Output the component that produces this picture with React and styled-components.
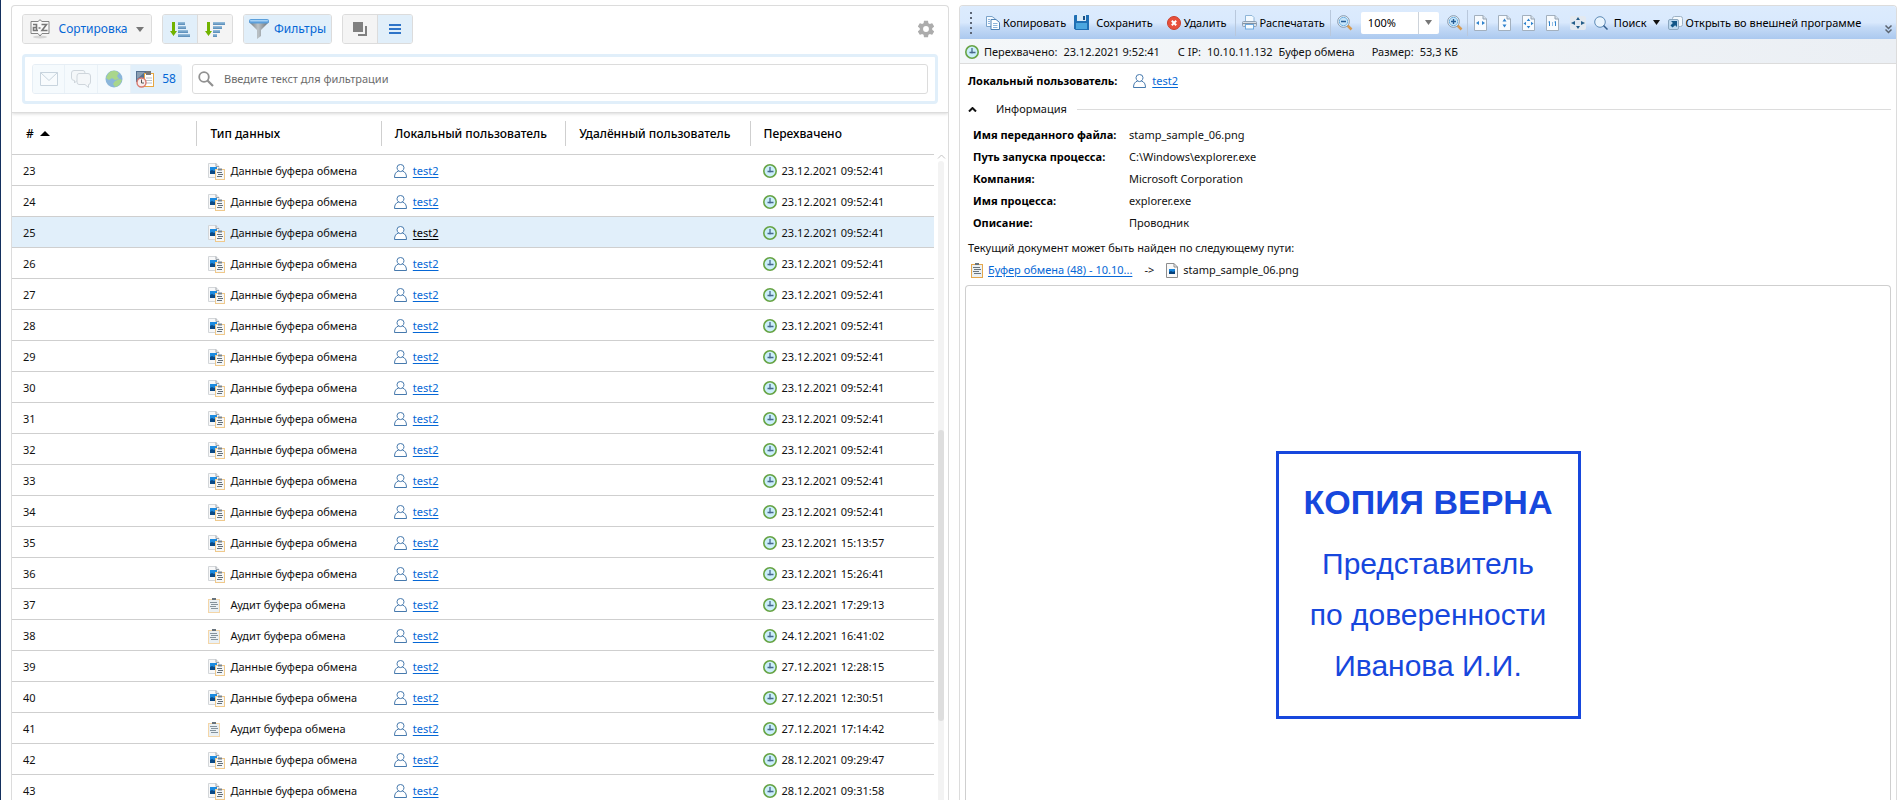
import React from "react";
import styled, { createGlobalStyle } from "styled-components";

const GlobalStyle = createGlobalStyle`
  * { box-sizing: border-box; }
  body {
    margin: 0;
    background: #fff;
    color: #111;
    font-family: "Noto Sans", "Open Sans", sans-serif;
    font-size: 11px;
    line-height: 16px;
    overflow: hidden;
  }
  button, input, select { font: inherit; color: inherit; }
  svg { display: block; flex: none; }
`;

const line = "#cfcfcf";
const frame = "#dcdcdc";
const pale = "#e1effa";
const blue = "#0567d6";

const Page = styled.main`
  display: grid;
  grid-template-columns: minmax(0, 1fr) minmax(0, 1fr);
  gap: 10px;
  height: 100vh;
  padding: 5px 1px 0 10px;
  border-left: 1px solid #14305f;
`;

const Panel = styled.section`
  display: flex;
  flex-direction: column;
  min-height: 0;
  overflow: hidden;
  border: 1px solid ${frame};
  border-bottom: 0;
  border-radius: 4px 4px 0 0;
`;

/* ---------- left panel: tools ---------- */

const Tools = styled.div`
  position: relative;
  padding: 8px 10px;
  border-bottom: 1px solid ${frame};
  box-shadow: 0 1px 3px rgba(0, 0, 0, 0.15);
`;

const ToolRow = styled.div`
  display: flex;
  align-items: center;
  gap: 10px;
  margin-bottom: 10px;
`;

const ButtonGroup = styled.div`
  display: flex;
  height: 30px;
  overflow: hidden;
  border: 1px solid ${frame};
  border-radius: 3px;
`;

const ToolButton = styled.button`
  display: flex;
  align-items: center;
  justify-content: center;
  gap: ${(p) => p.$gap || 5}px;
  width: ${(p) => p.$width}px;
  padding: 0;
  border: 0;
  background: ${(p) => (p.$active ? pale : "#f4f4f4")};
  color: ${blue};
  font-size: 12px;
  & + & { border-left: 1px solid ${frame}; }
`;

const GearButton = styled.button`
  margin-left: auto;
  padding: 0 2px;
  border: 0;
  background: none;
`;

const FilterBox = styled.div`
  display: flex;
  gap: 10px;
  padding: 7px;
  border: 3px solid ${pale};
  border-radius: 4px;
`;

const SourceGroup = styled(ButtonGroup)`
  border-color: #e6eef5;
`;

const SourceButton = styled(ToolButton)`
  background: ${(p) => (p.$active ? pale : "#f5fafd")};
  & + & { border-left-color: #e9f1f7; }
`;

const SearchField = styled.label`
  display: flex;
  flex: 1;
  align-items: center;
  gap: 10px;
  height: 30px;
  padding: 0 5px;
  border: 1px solid ${frame};
  border-radius: 3px;
`;

const SearchInput = styled.input`
  flex: 1;
  min-width: 0;
  padding: 0;
  border: 0;
  outline: 0;
  background: none;
  &::placeholder { color: #6c6c6c; opacity: 1; }
`;

/* ---------- left panel: table ---------- */

const ListArea = styled.div`
  display: flex;
  flex: 1;
  min-height: 0;
`;

const TableWrap = styled.div`
  flex: 1;
  min-width: 0;
  overflow: hidden;
`;

const Table = styled.table`
  width: 100%;
  table-layout: fixed;
  border-spacing: 0;
`;

const HeadCell = styled.th`
  height: 42px;
  padding: 0;
  border-bottom: 1px solid ${line};
  color: #000;
  font-size: 12px;
  font-weight: 500;
  text-align: left;
  white-space: nowrap;
`;

const HeadLabel = styled.span`
  display: flex;
  align-items: center;
  gap: 6px;
  height: 25px;
  padding-left: 13px;
  border-left: 1px solid ${(p) => (p.$first ? "transparent" : line)};
`;

const Row = styled.tr`
  background: ${(p) => (p.$selected ? pale : "#fff")};
`;

const Cell = styled.td`
  height: 31px;
  padding: 2px 0 0 ${(p) => p.$inset}px;
  border-bottom: 1px solid ${line};
  white-space: nowrap;
`;

const CellContent = styled.span`
  display: flex;
  align-items: center;
  gap: ${(p) => p.$gap}px;
`;

const IconSlot = styled.span`
  width: 18px;
`;

const Link = styled.a`
  color: ${(p) => (p.$dark ? "#000" : blue)};
  text-decoration: underline;
  text-underline-offset: 2px;
`;

const ScrollColumn = styled.div`
  display: flex;
  flex-direction: column;
  align-items: center;
  gap: 2px;
  width: 14px;
  padding-top: 41px;
`;

const Track = styled.div`
  flex: 1;
  width: 6px;
  border-radius: 3px 3px 0 0;
  background: #f3f3f3;
`;

const Thumb = styled.div`
  height: 291px;
  margin-top: 269px;
  border-radius: 3px;
  background: #dedede;
`;

/* ---------- right panel ---------- */

const Ribbon = styled.div`
  display: flex;
  align-items: center;
  height: 33px;
  padding: 0 4px 0 10px;
  background: linear-gradient(#dcebfd 0%, #d9e9fd 50%, #c4daf6 65%, #abc9ef 100%);
  color: #000;
`;

const Grip = styled.span`
  width: 2px;
  height: 22px;
  margin-right: 14px;
  background: repeating-linear-gradient(#5c6676 0 2px, transparent 2px 5px);
`;

const RibbonButton = styled.button`
  display: flex;
  align-items: center;
  gap: ${(p) => p.$gap || 3}px;
  margin-right: ${(p) => p.$after || 0}px;
  padding: 0;
  border: 0;
  background: none;
  white-space: nowrap;
`;

const Divider = styled.span`
  width: 1px;
  height: 26px;
  margin-right: 6px;
  background: #b9c8dc;
`;

const ZoomBox = styled.span`
  position: relative;
  display: flex;
  width: 78px;
  height: 22px;
  margin-right: 8px;
  background: #fff;
  border-radius: 2px;
`;

const ZoomSelect = styled.select`
  width: 100%;
  padding: 0 0 0 7px;
  border: 0;
  outline: 0;
  appearance: none;
  background: none;
`;

const ZoomArrow = styled.span`
  position: absolute;
  inset: 0 0 0 auto;
  display: grid;
  place-items: center;
  width: 21px;
  border-left: 1px solid #cdd3da;
  pointer-events: none;
`;

const MoreButton = styled.button`
  align-self: flex-end;
  margin-left: auto;
  padding: 0 0 5px;
  border: 0;
  background: none;
`;

const MetaBar = styled.div`
  display: flex;
  align-items: center;
  height: 25px;
  padding: 1px 0 0 5px;
  border-bottom: 1px solid ${frame};
  background: linear-gradient(90deg, #f4f7f9, #ebeff4);
`;

const Meta = styled.span`
  display: flex;
  gap: 6px;
  margin-right: ${(p) => p.$after || 0}px;
  padding-left: ${(p) => p.$before || 0}px;
`;

const UserLine = styled.div`
  display: flex;
  align-items: center;
  gap: 6px;
  height: 34px;
  padding-left: 8px;
  strong { margin-right: 10px; color: #000; }
`;

const InfoToggle = styled.button`
  display: flex;
  align-items: center;
  gap: 19px;
  width: 100%;
  height: 22px;
  padding: 0 5px 0 8px;
  border: 0;
  background: none;
  &::after {
    content: "";
    flex: 1;
    height: 1px;
    margin-left: -9px;
    background: ${frame};
  }
`;

const Details = styled.dl`
  display: grid;
  grid-template-columns: 156px 1fr;
  grid-auto-rows: 22px;
  align-items: center;
  margin: 4px 0 0;
  padding-left: 13px;
`;

const Term = styled.dt`
  color: #000;
  font-weight: 700;
  white-space: nowrap;
`;

const Value = styled.dd`
  margin: 0;
`;

const PathNote = styled.p`
  margin: 6px 0 5px;
  padding-left: 8px;
`;

const PathLine = styled.div`
  display: flex;
  align-items: center;
  gap: 5px;
  height: 18px;
  padding-left: 11px;
`;

const Arrow = styled.span`
  margin: 0 7px;
`;

const Preview = styled.div`
  flex: 1;
  margin: 6px 5px 0;
  padding-top: 165px;
  border: 1px solid ${line};
  border-bottom: 0;
  border-radius: 4px 4px 0 0;
`;

const Stamp = styled.figure`
  display: flex;
  flex-direction: column;
  align-items: center;
  width: 305px;
  height: 268px;
  margin: 0 auto;
  padding-top: 20px;
  border: 3px solid #1747dd;
  color: #1747dd;
  font-family: "Liberation Sans", sans-serif;
  font-size: 30px;
  line-height: 51px;
  white-space: nowrap;
  strong { font-size: 34px; line-height: 56px; margin-bottom: 8px; }
`;

/* ---------- icons ---------- */

const Caret = ({ color = "#777", w = 8, up }) => (
  <svg width={w} height="5" viewBox="0 0 8 5" preserveAspectRatio="none" aria-hidden="true">
    <path d={up ? "M0 5L4 0L8 5Z" : "M0 0H8L4 5Z"} fill={color} />
  </svg>
);

const SortIcon = () => (
  <svg width="20" height="20" viewBox="0 0 20 20" aria-hidden="true">
    <ellipse cx="10" cy="18" rx="7" ry="1.5" fill="#d5d5d5" />
    <path d="M1 2.5H8L10 .7L12 2.5H19V14.5H12L10 17L8 14.5H1Z" fill="#fafafa" stroke="#858585" />
    <path d="M3 5.500H6.500V12M6.500 8.500H3.500V11.500H8M8.500 9H10.500M11.500 5.500H16.500L12 11.500H17.500" fill="none" stroke="#777" strokeWidth="1.600" />
  </svg>
);

const barWidths = { up: [7, 8, 10, 12], down: [12, 9, 7, 4] };

const BarsIcon = ({ kind }) => (
  <svg width="20" height="15" viewBox="0 0 20 15" aria-hidden="true">
    <defs>
      <linearGradient id={`bars-${kind}`} x2="0" y2="1">
        <stop stopColor="#9cc2de" />
        <stop offset="1" stopColor="#5489b7" />
      </linearGradient>
    </defs>
    <path d="M2 0H5V9H7L3.500 14L0 9H2Z" fill="#72b300" />
    {barWidths[kind].map((w, i) => (
      <rect key={w} x="8" y={i * 4} width={w} height="3" fill={`url(#bars-${kind})`} />
    ))}
  </svg>
);

const FunnelIcon = () => (
  <svg width="20" height="20" viewBox="0 0 20 20" aria-hidden="true">
    <defs>
      <linearGradient id="funnel">
        <stop stopColor="#6d7479" />
        <stop offset=".45" stopColor="#bcc3c7" />
        <stop offset="1" stopColor="#656c71" />
      </linearGradient>
    </defs>
    <path d="M0 3H20L12 11V17L8 20V11Z" fill="url(#funnel)" />
    <rect width="20" height="4.500" rx="2" fill="#5b9fdb" />
    <rect x="1" y="1" width="18" height="1.500" rx=".7" fill="#a7d2f5" />
  </svg>
);

const CardsIcon = () => (
  <svg width="15" height="14" viewBox="0 0 15 14" aria-hidden="true">
    <rect width="10" height="10" fill="#808080" />
    <path d="M13 4V13H5" fill="none" stroke="#808080" strokeWidth="2" />
  </svg>
);

const LinesIcon = () => (
  <svg width="12" height="10" viewBox="0 0 12 10" aria-hidden="true">
    <path d="M0 1H12M0 5H12M0 9H12" stroke="#2f74c8" strokeWidth="2" />
  </svg>
);

const GearIcon = () => (
  <svg width="20" height="20" viewBox="0 0 24 24" aria-hidden="true">
    <path fill="#acacac" d="M19.430 12.980c.04-.32.07-.64.07-.98s-.03-.66-.07-.98l2.110-1.650c.19-.15.24-.42.12-.64l-2-3.460c-.12-.22-.39-.3-.61-.22l-2.490 1c-.52-.4-1.080-.73-1.690-.98l-.38-2.650C14.460 2.180 14.250 2 14 2h-4c-.25 0-.46.18-.49.42l-.38 2.650c-.61.25-1.170.59-1.690.98l-2.490-1c-.23-.09-.49 0-.61.22l-2 3.460c-.13.22-.07.49.12.64l2.110 1.650c-.04.32-.07.65-.07.98s.03.66.07.98l-2.110 1.650c-.19.15-.24.42-.12.64l2 3.460c.12.22.39.3.61.22l2.490-1c.52.4 1.080.73 1.690.98l.38 2.650c.03.24.24.42.49.42h4c.25 0 .46-.18.49-.42l.38-2.650c.61-.25 1.170-.59 1.690-.98l2.490 1c.23.09.49 0 .61-.22l2-3.460c.12-.22.07-.49-.12-.64l-2.110-1.650zM12 15.500a3.500 3.500 0 1 1 0-7 3.500 3.500 0 0 1 0 7z" />
  </svg>
);

const MailIcon = () => (
  <svg width="18" height="14" viewBox="0 0 18 14" aria-hidden="true">
    <path d="M.5.5H17.500V13.500H.5ZM.5.5L9 8.500L17.500.5" fill="#f8fbfd" stroke="#c8d4de" />
  </svg>
);

const ChatIcon = () => (
  <svg width="20" height="18" viewBox="0 0 20 18" aria-hidden="true">
    <g fill="#f4f7f9" stroke="#cfd6dc">
      <path d="M3 .5H12Q14 .5 14 3V8Q14 10.500 12 10.500H6L3.500 13V10.500Q.5 10.500.5 8V3Q.5.5 3 .5Z" />
      <path d="M8 3.500H17Q19.500 3.500 19.500 6V12Q19.500 14.500 17.500 14.500V17.500L14 14.500H8Q6 14.500 6 12V6Q6 3.500 8 3.500Z" />
    </g>
  </svg>
);

const GlobeIcon = () => (
  <svg width="18" height="18" viewBox="0 0 18 18" aria-hidden="true">
    <circle cx="9" cy="9" r="8.500" fill="#8bb6da" />
    <path d="M3 4Q6 0 11 1L14 3L12 6L14 9L10 10L7 8L4 10L1 8ZM10 11L15 9L17 10Q15 16 10 17L8 14Z" fill="#a9d68b" />
  </svg>
);

const ClipTimeIcon = () => (
  <svg width="18" height="17" viewBox="0 0 18 17" aria-hidden="true">
    <rect width="14" height="11" fill="#54708f" />
    <path d="M1 1H9L1 8Z" fill="#8b9eb2" />
    <rect x="8.500" y="2.500" width="9" height="13" fill="#fff" stroke="#e8a640" />
    <rect x="10" y="0" width="5" height="4" fill="#777" />
    <path d="M10 7H16M10 9.500H16M10 12H16" stroke="#b9bfc5" />
    <circle cx="5.500" cy="11.500" r="4.500" fill="#f8eeee" stroke="#d9796e" strokeWidth="1.400" />
    <path d="M5.500 8.500V12H8" fill="none" stroke="#555" />
  </svg>
);

const MagnifierIcon = () => (
  <svg width="16" height="16" viewBox="0 0 16 16" aria-hidden="true">
    <circle cx="6" cy="6" r="4.800" fill="none" stroke="#919191" strokeWidth="1.800" />
    <path d="M9.500 9.500L15 15" stroke="#919191" strokeWidth="2.200" />
  </svg>
);

const UserIcon = () => (
  <svg width="13" height="14" viewBox="0 0 13 14" aria-hidden="true">
    <path d="M4.700 7Q3 5.600 3 3.700Q3 .5 6.500.5T10 3.700Q10 5.600 8.300 7Q12.500 8 12.500 13.500H.5Q.5 8 4.700 7ZM4.700 7Q6.500 8.200 8.300 7" fill="#fff" stroke="#4679ad" />
  </svg>
);

const ClockIcon = () => (
  <svg width="14" height="14" viewBox="0 0 14 14" aria-hidden="true">
    <circle cx="7" cy="7" r="6.200" fill="#cbeefb" stroke="#67a444" strokeWidth="1.600" />
    <path d="M7 3V8.500M4.500 7.500H10.500" fill="none" stroke="#47688a" strokeWidth="1.300" />
  </svg>
);

const DataIcon = () => (
  <svg width="18" height="17" viewBox="0 0 18 17" aria-hidden="true">
    <path d="M.5.5H8L11 3.500V14.500H.5Z" fill="#f7f8f9" stroke="#d3d6d9" />
    <path d="M8 .5V3.500H11" fill="none" stroke="#9ca2a8" />
    <rect x="2" y="4" width="7" height="7" fill="#1c8be0" />
    <path d="M2 11V8L4 7L6 8L9 7V11Z" fill="#0b4a86" />
    <rect x="7.500" y="6.500" width="9" height="10" fill="#f5f7f8" stroke="#efc98c" />
    <path d="M10 6.500H14" stroke="#7b858d" strokeWidth="2" />
    <path d="M9 9.500H14M10 11.500H15M9 13.500H14" stroke="#65717b" />
  </svg>
);

const AuditIcon = ({ strong }) => (
  <svg width="12" height="15" viewBox="0 0 12 15" aria-hidden="true">
    <rect x=".5" y="1.500" width="11" height="13" fill="#eaf0f4" stroke={strong ? "#e5a74c" : "#f4d6a8"} />
    <path d="M4 1H8" stroke="#68737c" strokeWidth="2" />
    <path d="M2 4.500H9M3 6.500H10M2 8.500H8M3 10.500H10" stroke={strong ? "#69747d" : "#84929c"} />
  </svg>
);

const PngIcon = () => (
  <svg width="12" height="15" viewBox="0 0 12 15" aria-hidden="true">
    <path d="M.5.5H8L11.500 4V14.500H.5Z" fill="#f9f9f9" stroke="#8d8d8d" />
    <path d="M8 .5V4H11.500" fill="none" stroke="#8d8d8d" />
    <rect x="3" y="6" width="6" height="5" fill="#1684da" />
    <path d="M3 11V9L5 8L7 9L9 8V11Z" fill="#063f78" />
  </svg>
);

const CopyIcon = () => (
  <svg width="14" height="14" viewBox="0 0 14 14" aria-hidden="true">
    <path d="M.5.500H6L9.500 3V10.500H.5Z" fill="#f5faff" stroke="#7ba3ca" />
    <path d="M5 3.500H10L13.500 6.500V13.500H5Z" fill="#fff" stroke="#4f81b4" />
    <path d="M2 3.500H4M2 5.500H4M2 7.500H4M7 7.500H11.500M7 9.500H11.500M7 11.500H11.500" stroke="#8fb5dc" />
  </svg>
);

const SaveIcon = () => (
  <svg width="15" height="15" viewBox="0 0 15 15" aria-hidden="true">
    <path d="M0 1Q0 0 1 0H15V15H1.500L0 13.500Z" fill="#1f6fb4" />
    <rect x="3" width="9" height="6" fill="#dcecf8" />
    <rect x="9" y="1" width="2" height="4" fill="#1b4f84" />
    <rect x="2" y="8" width="11" height="6" fill="#4ba6df" />
  </svg>
);

const DeleteIcon = () => (
  <svg width="14" height="14" viewBox="0 0 14 14" aria-hidden="true">
    <circle cx="7" cy="7" r="6.500" fill="#e8503b" stroke="#c9402e" />
    <path d="M4.800 4.800L9.200 9.200M9.200 4.800L4.800 9.200" stroke="#fff" strokeWidth="2" />
  </svg>
);

const PrintIcon = () => (
  <svg width="15" height="15" viewBox="0 0 15 15" aria-hidden="true">
    <path d="M3.500.5H10L12 2.500V7H3.500Z" fill="#f4faff" stroke="#8fb6d8" />
    <rect x=".5" y="6.500" width="14" height="5" rx="1" fill="#d9e1e9" stroke="#8fa1b4" />
    <rect x="3.500" y="9.500" width="8" height="4.500" fill="#f5fbff" stroke="#6fa9dd" />
    <path d="M1 8.500H14" stroke="#8292a3" />
  </svg>
);

const ZoomIcon = ({ plus }) => (
  <svg width="16" height="16" viewBox="0 0 16 16" aria-hidden="true">
    <path d="M10.500 10.500L14.500 14.500" stroke="#d99a4e" strokeWidth="2.500" />
    <circle cx="6.500" cy="6.500" r="5.800" fill="#f3f8fc" stroke="#8296aa" />
    <circle cx="6.500" cy="6.500" r="4.200" fill="#c6e5fa" stroke="#71b2e2" />
    <path d={plus ? "M4 6.500H9M6.500 4V9" : "M4 6.500H9"} stroke="#245c96" strokeWidth="1.400" />
  </svg>
);

const fitArrows = {
  width: "M5 6V10L2 8ZM8 6V10L11 8Z",
  height: "M4.500 6.500H8.500L6.500 3.500ZM4.500 9.500H8.500L6.500 12.500Z",
  page: "M4.700 6H8.300L6.500 3.500ZM4.700 11H8.300L6.500 13.500ZM4 6.700V10.300L1.500 8.500ZM9 6.700V10.300L11.500 8.500Z",
  actual: "M2 7L4 6V11H3V7.500ZM6 7.500H7V8.500H6ZM6 9.500H7V10.500H6ZM8 7L10 6V11H9V7.500Z",
};

const FitIcon = ({ kind }) => (
  <svg width="13" height="16" viewBox="0 0 13 16" aria-hidden="true">
    <path d="M.5.5H9L12.500 4V15.500H.5Z" fill="#f8fbfe" stroke="#a3b0be" />
    <path d="M9 .5V4H12.500" fill="#d8e1ea" stroke="#94a3b3" />
    <path d={fitArrows[kind]} fill="#2e82cd" />
  </svg>
);

const FullIcon = () => (
  <svg width="16" height="14" viewBox="0 0 16 14" aria-hidden="true">
    <rect width="16" height="14" rx="2" fill="#e3e9f0" />
    <path d="M6 4H10L8 1ZM6 10H10L8 13ZM5 5V9L1 7ZM11 5V9L15 7Z" fill="#235c88" />
  </svg>
);

const FindIcon = () => (
  <svg width="14" height="14" viewBox="0 0 14 14" aria-hidden="true">
    <circle cx="6" cy="6" r="5.300" fill="#e9f4fd" stroke="#5e8ab5" />
    <path d="M9.500 9.500L13.500 13.500" stroke="#315d8c" strokeWidth="1.500" />
  </svg>
);

const OpenIcon = () => (
  <svg width="15" height="14" viewBox="0 0 15 14" aria-hidden="true">
    <rect x="4.500" y=".5" width="10" height="10" rx="2" fill="#f3f8fc" stroke="#9eb2c5" />
    <rect x=".5" y="3.500" width="10" height="10" rx="1.500" fill="#bcd8ee" stroke="#8ba7bf" />
    <path d="M3 5H9V11L7.200 9.200L4.500 11.500L2.500 9.500L4.900 7Z" fill="#135787" />
  </svg>
);

const Chevrons = () => (
  <svg width="7" height="9" viewBox="0 0 7 9" aria-hidden="true">
    <path d="M.5.500L3.500 3.500L6.500.5M.5 4.500L3.500 7.500L6.500 4.500" fill="none" stroke="#5b6470" strokeWidth="1.500" />
  </svg>
);

const ChevronUp = ({ color, width }) => (
  <svg width="9" height="5" viewBox="0 0 9 5" aria-hidden="true">
    <path d="M1 4.500L4.500 1L8 4.500" fill="none" stroke={color} strokeWidth={width} />
  </svg>
);

/* ---------- data ---------- */

const laterTimes = [
  "23.12.2021 15:13:57", "23.12.2021 15:26:41", "23.12.2021 17:29:13",
  "24.12.2021 16:41:02", "27.12.2021 12:28:15", "27.12.2021 12:30:51",
  "27.12.2021 17:14:42", "28.12.2021 09:29:47", "28.12.2021 09:31:58",
];
const auditRows = [37, 38, 41];
const rows = Array.from({ length: 21 }, (_, i) => ({
  id: 23 + i,
  audit: auditRows.includes(23 + i),
  time: i < 12 ? "23.12.2021 09:52:41" : laterTimes[i - 12],
}));

const columns = ["Тип данных", "Локальный пользователь", "Удалённый пользователь", "Перехвачено"];

const details = [
  ["Имя переданного файла:", "stamp_sample_06.png"],
  ["Путь запуска процесса:", "C:\\Windows\\explorer.exe"],
  ["Компания:", "Microsoft Corporation"],
  ["Имя процесса:", "explorer.exe"],
  ["Описание:", "Проводник"],
];

const fits = [
  ["width", "По ширине"],
  ["height", "По высоте"],
  ["page", "Страница целиком"],
  ["actual", "Исходный размер"],
];

/* ---------- page ---------- */

function ListPanel() {
  return (
    <Panel>
      <Tools>
        <ToolRow>
          <ButtonGroup>
            <ToolButton $width={128} $gap={8}>
              <SortIcon />Сортировка<Caret />
            </ToolButton>
          </ButtonGroup>
          <ButtonGroup>
            <ToolButton $width={34} $active aria-label="По возрастанию"><BarsIcon kind="up" /></ToolButton>
            <ToolButton $width={35} aria-label="По убыванию"><BarsIcon kind="down" /></ToolButton>
          </ButtonGroup>
          <ButtonGroup>
            <ToolButton $width={87} $active><FunnelIcon />Фильтры</ToolButton>
          </ButtonGroup>
          <ButtonGroup>
            <ToolButton $width={34} aria-label="Карточки"><CardsIcon /></ToolButton>
            <ToolButton $width={35} $active aria-label="Список"><LinesIcon /></ToolButton>
          </ButtonGroup>
          <GearButton aria-label="Настройки"><GearIcon /></GearButton>
        </ToolRow>
        <FilterBox>
          <SourceGroup>
            <SourceButton $width={31} aria-label="Почта"><MailIcon /></SourceButton>
            <SourceButton $width={33} aria-label="Чаты"><ChatIcon /></SourceButton>
            <SourceButton $width={33} aria-label="Веб"><GlobeIcon /></SourceButton>
            <SourceButton $width={51} $active $gap={8}><ClipTimeIcon />58</SourceButton>
          </SourceGroup>
          <SearchField>
            <MagnifierIcon />
            <SearchInput type="text" aria-label="Фильтр" placeholder="Введите текст для фильтрации" />
          </SearchField>
        </FilterBox>
      </Tools>
      <ListArea>
        <TableWrap>
          <Table>
            <thead>
              <tr>
                <HeadCell scope="col"><HeadLabel $first>#<Caret color="#000" w={10} up /></HeadLabel></HeadCell>
                {columns.map((c) => (
                  <HeadCell key={c} scope="col"><HeadLabel>{c}</HeadLabel></HeadCell>
                ))}
              </tr>
            </thead>
            <tbody>
              {rows.map((r) => (
                <Row key={r.id} $selected={r.id === 25}>
                  <Cell $inset={11}>{r.id}</Cell>
                  <Cell $inset={12}>
                    <CellContent $gap={4}>
                      <IconSlot>{r.audit ? <AuditIcon /> : <DataIcon />}</IconSlot>
                      {r.audit ? "Аудит буфера обмена" : "Данные буфера обмена"}
                    </CellContent>
                  </Cell>
                  <Cell $inset={13}>
                    <CellContent $gap={6}>
                      <UserIcon /><Link href="#user" $dark={r.id === 25}>test2</Link>
                    </CellContent>
                  </Cell>
                  <Cell $inset={13} />
                  <Cell $inset={13}>
                    <CellContent $gap={5}><ClockIcon />{r.time}</CellContent>
                  </Cell>
                </Row>
              ))}
            </tbody>
          </Table>
        </TableWrap>
        <ScrollColumn>
          <ChevronUp color="#c4c4c4" width={1} />
          <Track><Thumb /></Track>
        </ScrollColumn>
      </ListArea>
    </Panel>
  );
}

function DocumentPanel() {
  return (
    <Panel>
      <Ribbon>
        <Grip />
        <RibbonButton $after={8}><CopyIcon />Копировать</RibbonButton>
        <RibbonButton $gap={7} $after={14}><SaveIcon />Сохранить</RibbonButton>
        <RibbonButton $after={8}><DeleteIcon />Удалить</RibbonButton>
        <Divider />
        <RibbonButton $after={5}><PrintIcon />Распечатать</RibbonButton>
        <Divider />
        <RibbonButton $after={8} aria-label="Уменьшить"><ZoomIcon /></RibbonButton>
        <ZoomBox>
          <ZoomSelect aria-label="Масштаб" defaultValue="100%"><option>100%</option></ZoomSelect>
          <ZoomArrow><Caret w={7} /></ZoomArrow>
        </ZoomBox>
        <RibbonButton $after={4} aria-label="Увеличить"><ZoomIcon plus /></RibbonButton>
        <Divider />
        {fits.map(([kind, label]) => (
          <RibbonButton key={kind} $after={11} aria-label={label}><FitIcon kind={kind} /></RibbonButton>
        ))}
        <RibbonButton $after={8} aria-label="Во весь экран"><FullIcon /></RibbonButton>
        <RibbonButton $gap={6} $after={8}><FindIcon />Поиск<Caret color="#111" w={7} /></RibbonButton>
        <RibbonButton><OpenIcon />Открыть во внешней программе</RibbonButton>
        <MoreButton aria-label="Ещё"><Chevrons /></MoreButton>
      </Ribbon>
      <MetaBar>
        <ClockIcon />
        <Meta $before={5} $after={18}><span>Перехвачено:</span><span>23.12.2021 9:52:41</span></Meta>
        <Meta $after={6}><span>С IP:</span><span>10.10.11.132</span></Meta>
        <Meta $after={17}>Буфер обмена</Meta>
        <Meta><span>Размер:</span><span>53,3 КБ</span></Meta>
      </MetaBar>
      <UserLine>
        <strong>Локальный пользователь:</strong>
        <UserIcon />
        <Link href="#user">test2</Link>
      </UserLine>
      <InfoToggle aria-expanded="true"><ChevronUp color="#111" width={2} />Информация</InfoToggle>
      <Details>
        {details.map(([term, value]) => (
          <React.Fragment key={term}>
            <Term>{term}</Term>
            <Value>{value}</Value>
          </React.Fragment>
        ))}
      </Details>
      <PathNote>Текущий документ может быть найден по следующему пути:</PathNote>
      <PathLine>
        <AuditIcon strong />
        <Link href="#clipboard">Буфер обмена (48) - 10.10...</Link>
        <Arrow>-&gt;</Arrow>
        <PngIcon />
        stamp_sample_06.png
      </PathLine>
      <Preview>
        <Stamp>
          <strong>КОПИЯ ВЕРНА</strong>
          <span>Представитель</span>
          <span>по доверенности</span>
          <span>Иванова И.И.</span>
        </Stamp>
      </Preview>
    </Panel>
  );
}

export default function App() {
  return (
    <>
      <GlobalStyle />
      <Page>
        <ListPanel />
        <DocumentPanel />
      </Page>
    </>
  );
}
